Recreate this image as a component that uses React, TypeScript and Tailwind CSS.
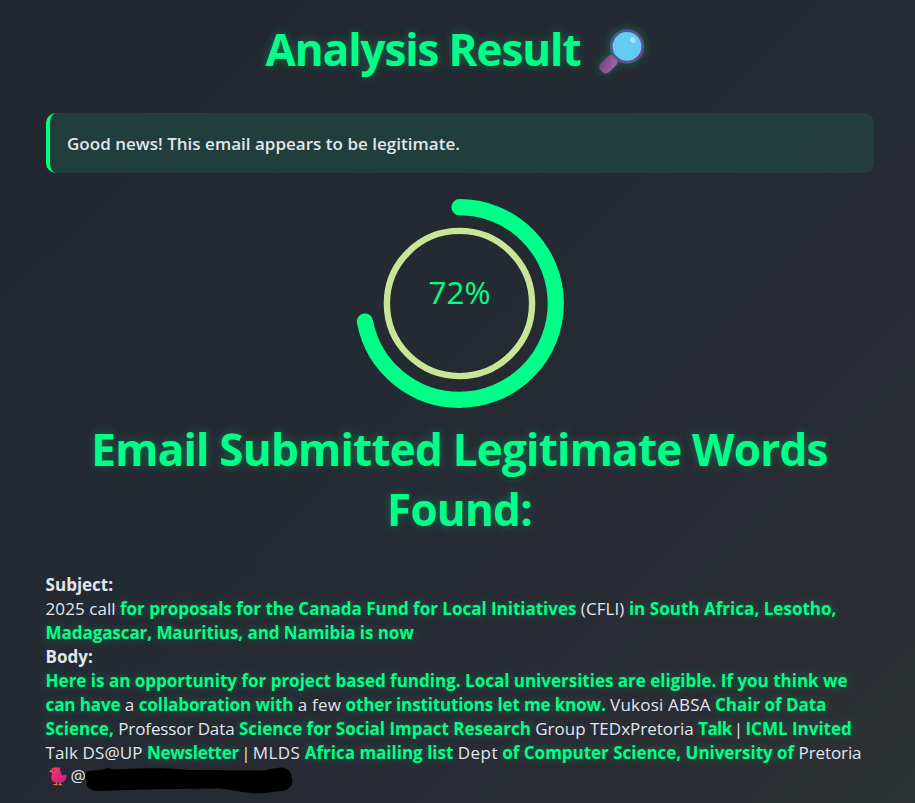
import type { ReactNode } from 'react';

function MagnifierIcon() {
  return (
    <svg
      width="46"
      height="46"
      viewBox="0 0 46 46"
      className="overflow-visible drop-shadow-[0_0_5px_rgba(0,255,136,0.3)]"
    >
      <defs>
        <linearGradient id="handle" x1="0" y1="0" x2="0.6" y2="1">
          <stop offset="0" stopColor="#784280" />
          <stop offset="1" stopColor="#a263a2" />
        </linearGradient>
        <linearGradient id="rim" x1="0" y1="0" x2="1" y2="1">
          <stop offset="0" stopColor="#3f5a98" />
          <stop offset="1" stopColor="#704a88" />
        </linearGradient>
        <linearGradient id="glint" x1="0" y1="1" x2="1" y2="0">
          <stop offset="0" stopColor="#d5f0fb" />
          <stop offset="1" stopColor="#8fd4f2" />
        </linearGradient>
      </defs>
      <rect
        x="-0.5"
        y="29.2"
        width="20"
        height="12"
        rx="5"
        transform="rotate(-45 9.500 35.200)"
        fill="url(#handle)"
      />
      <circle cx="28" cy="17.400" r="15.800" fill="#62cdf0" stroke="url(#rim)" strokeWidth="2.800" />
      <circle cx="34.200" cy="10.800" r="2.800" fill="url(#glint)" />
    </svg>
  );
}

function BirdIcon() {
  return (
    <svg width="18" height="19" viewBox="0 0 18 19" className="ml-[3px] mr-[4px] mt-[2px] shrink-0">
      <defs>
        <linearGradient id="feathers" x1="0" y1="0" x2="0.7" y2="1">
          <stop offset="0" stopColor="#f4405c" />
          <stop offset="0.6" stopColor="#e8207c" />
          <stop offset="1" stopColor="#c02c90" />
        </linearGradient>
      </defs>
      <path d="M7.500 15v3M11 15v3M4.500 17.700h4M9.500 17.700h3.500" stroke="#c98532" strokeWidth="1.300" fill="none" />
      <path d="M2.600 2.800 0.300 4.500 2.800 5.600z" fill="#f2b632" />
      <path d="M2.200 4C2.200 1.500 3.800 0.400 6 0.400h5.200c-.4 3 .3 5 1.900 8.200l4.200-1.200c.5 4.400-1.200 7.800-6 8H7c-3.200 0-5-2.200-4.800-5.400.1-1.600 1-2.700.8-3.800z" fill="url(#feathers)" />
      <path d="M6.800 5.500c0 3 2.200 5.600 6.300 3.100-.4 2.800-3 4-5.200 3.200" fill="#fb1f72" />
      <circle cx="4.500" cy="3.300" r="0.600" fill="#6b1830" />
    </svg>
  );
}

function Redaction() {
  return (
    <svg width="208" height="28" viewBox="0 0 208 28" className="-ml-px mt-px shrink-0">
      <path
        d="M0 9C1 5 5 4.500 12 4.300L20 3.200C21 1.200 24 1.200 25 3 37 3.500 51 2.500 62 2.300 85 1.600 98 4 110 4L178 4.500C184 4 190 1.500 196 1.500 203 2 206 6 206.500 10 207.500 14 208 18 205 21 202 25 198 25 190 25.500 182 27.500 170 28 162 26.500 150 25 140 22.500 130 22.500L60 23.500 14 25C6 25 3 22 1.500 18Z"
        fill="#000"
      />
    </svg>
  );
}

function ScoreRing({ percent }: { percent: number }) {
  return (
    <svg width="210" height="210" viewBox="0.5 0.5 210 210" className="block">
      <circle cx="105" cy="105" r="72.600" fill="none" stroke="#c8e696" strokeWidth="6.400" />
      <circle
        cx="105"
        cy="105"
        r="96.300"
        fill="none"
        stroke="#00ff88"
        strokeWidth="16.200"
        strokeLinecap="round"
        pathLength={100}
        strokeDasharray={`${percent} 100`}
        transform="rotate(-90 105 105)"
      />
      <text x="105" y="105.500" textAnchor="middle" fontSize="31.500" fill="#00ff88">
        {percent}%
      </text>
    </svg>
  );
}

function Heading({ children, className = '' }: { children: ReactNode; className?: string }) {
  return (
    <div
      className={`flex justify-center whitespace-nowrap text-[44px] font-bold leading-[60px] text-[#00ff88] [text-shadow:0_0_10px_rgba(0,255,136,0.3)] ${className}`}
    >
      {children}
    </div>
  );
}

function Hit({ children, className = '' }: { children: ReactNode; className?: string }) {
  return (
    <strong
      className={`font-bold text-[#00ff88] [text-shadow:0_0_10px_rgba(0,255,136,0.3)] ${className}`}
    >
      {children}
    </strong>
  );
}

function Line({ children }: { children: ReactNode }) {
  return <div className="h-6 whitespace-nowrap">{children}</div>;
}

function Pipe() {
  return <span className="mx-[-2.2px]">|</span>;
}

export default function App() {
  return (
    <main className="h-[803px] w-[915px] overflow-hidden bg-[linear-gradient(135deg,#222630_0%,#242a32_40%,#282b34_70%,#2d3233_100%)] pl-[45px] pr-[41px] pt-[19px] font-['Open_Sans','Noto_Sans',sans-serif] text-[17px] leading-6 text-[#e0e6ed]">
      <Heading className="items-center pr-[8px]">
        <span className="tracking-[-1.1px]">Analysis Result</span>
        <span className="ml-[19px] mt-[5px]">
          <MagnifierIcon />
        </span>
      </Heading>

      <div className="ml-px mt-[34px] flex h-[60px] items-center rounded-[10px] border-l-4 border-[#00ff88] bg-[#00ff88]/10 pl-[17px] pt-[2px] font-semibold tracking-[0.02px]">
        Good news! This email appears to be legitimate.
      </div>

      <div className="mt-[26px] flex justify-center">
        <ScoreRing percent={72} />
      </div>

      <Heading className="mt-[10px]">
        <span className="tracking-[-0.78px]">Email Submitted Legitimate Words</span>
      </Heading>
      <Heading>
        <span className="tracking-[-0.8px]">Found:</span>
      </Heading>

      <section className="mt-[34px] pl-[0.6px]">
        <Line>
          <strong className="font-bold">Subject:</strong>
        </Line>
        <Line>
          <span className="tracking-[0.06px]">2025 call</span>{' '}
          <Hit className="tracking-[-0.01px]">for proposals for the Canada Fund for Local Initiatives</Hit>{' '}
          <span className="tracking-[0.08px]">(CFLI)</span>{' '}
          <Hit className="tracking-[0.03px]">in South Africa, Lesotho,</Hit>
        </Line>
        <Line>
          <Hit className="tracking-[-0.07px]">Madagascar, Mauritius, and Namibia is now</Hit>
        </Line>
        <Line>
          <strong className="font-bold">Body:</strong>
        </Line>
        <Line>
          <Hit>
            Here is an opportunity for project based funding. Local universities are eligible. If you
            think we
          </Hit>
        </Line>
        <Line>
          <Hit className="tracking-[-0.12px]">can have</Hit> a{' '}
          <Hit className="tracking-[-0.08px]">collaboration with</Hit>{' '}
          <span className="tracking-[0.2px]">a few</span>{' '}
          <Hit className="tracking-[-0.13px]">other institutions let me know.</Hit>{' '}
          <span className="tracking-[0.2px]">Vukosi ABSA</span>{' '}
          <Hit className="tracking-[-0.03px]">Chair of Data</Hit>
        </Line>
        <Line>
          <Hit>Science,</Hit> <span className="tracking-[-0.1px]">Professor Data</span>{' '}
          <Hit className="tracking-[-0.01px]">Science for Social Impact Research</Hit>{' '}
          <span>Group TEDxPretoria</span> <Hit className="tracking-[-0.6px]">Talk</Hit> <Pipe />{' '}
          <Hit>ICML Invited</Hit>
        </Line>
        <Line>
          <span className="tracking-[0.1px]">Talk DS@UP</span>{' '}
          <Hit className="tracking-[-0.27px]">Newsletter</Hit> <Pipe />{' '}
          <span className="tracking-[0.45px]">MLDS</span> <Hit>Africa mailing list</Hit>{' '}
          <span className="tracking-[0.45px]">Dept</span>{' '}
          <Hit className="tracking-[-0.02px]">of Computer Science, University of</Hit>{' '}
          <span className="tracking-[-0.1px]">Pretoria</span>
        </Line>
        <div className="flex h-6 items-start">
          <BirdIcon />
          <span className="-mt-px">@</span>
          <Redaction />
        </div>
      </section>
    </main>
  );
}
